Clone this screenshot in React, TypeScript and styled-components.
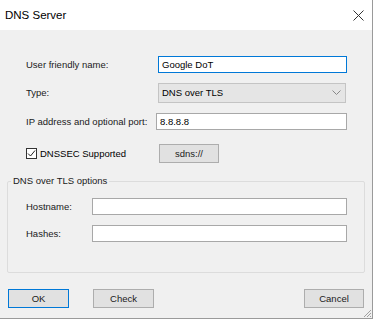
import styled, { createGlobalStyle } from 'styled-components';

const Global = createGlobalStyle`
  html, body {
    margin: 0;
    padding: 0;
    background: #ffffff;
  }
  body {
    font-family: "Liberation Sans", Arial, sans-serif;
    font-size: 9.5px;
    line-height: 12px;
    color: #000;
  }
`;

const Window = styled.div`
  width: 373px;
  height: 319px;
  box-sizing: border-box;
  border-right: 1px solid #9a9a9a;
  border-bottom: 1px solid #9a9a9a;
  display: flex;
  flex-direction: column;
  background: #f0f0f0;
`;

const TitleBar = styled.div`
  height: 30px;
  flex: none;
  background: #ffffff;
  display: flex;
  align-items: center;
  justify-content: space-between;
  padding: 0 8px 0 5px;
`;

const Title = styled.span`
  font-family: "Liberation Sans", Arial, sans-serif;
  font-size: 11.5px;
  color: #000;
`;

const Client = styled.div`
  flex: 1;
  display: flex;
  flex-direction: column;
  padding: 26px 8px 0 7px;
  position: relative;
`;

const Row = styled.div<{ $mb?: number }>`
  display: flex;
  align-items: center;
  padding-left: 19px;
  margin-bottom: ${(p) => p.$mb ?? 10}px;
`;

const Label = styled.label<{ $w: number }>`
  width: ${(p) => p.$w}px;
  flex: none;
  white-space: nowrap;
  color: #1a1a1a;
`;

const TextInput = styled.div<{ $w: number; $focused?: boolean }>`
  width: ${(p) => p.$w}px;
  height: 17px;
  box-sizing: border-box;
  background: #fff;
  border: 1px solid ${(p) => (p.$focused ? '#0078d7' : '#a8a8a8')};
  display: flex;
  align-items: center;
  padding-left: 3px;
  color: #000;
`;

const Combo = styled.div`
  width: 188px;
  height: 20px;
  box-sizing: border-box;
  background: #e5e5e5;
  border: 1px solid #c4c4c4;
  display: flex;
  align-items: center;
  justify-content: space-between;
  padding: 0 4px 0 3px;
`;

const CheckWrap = styled.div`
  width: 133px;
  flex: none;
  display: flex;
  align-items: center;
  gap: 3px;
`;

const CheckBox = styled.span`
  width: 11px;
  height: 11px;
  box-sizing: border-box;
  border: 1px solid #333;
  background: #fff;
  display: flex;
  align-items: center;
  justify-content: center;
`;

const Button = styled.div<{ $w: number; $default?: boolean }>`
  width: ${(p) => p.$w}px;
  height: 19px;
  box-sizing: border-box;
  background: #e1e1e1;
  border: 1px solid ${(p) => (p.$default ? '#0078d7' : '#adadad')};
  display: flex;
  align-items: center;
  justify-content: center;
  color: #1a1a1a;
`;

const Group = styled.fieldset`
  margin: 12px 0 0 0;
  padding: 11px 0 0 0;
  height: 98px;
  box-sizing: border-box;
  border: 1px solid #dcdcdc;
  border-radius: 2px;
  width: 358px;
`;

const Legend = styled.legend`
  padding: 0 2px;
  margin-left: 3px;
  color: #1a1a1a;
`;

const GroupRow = styled.div`
  display: flex;
  align-items: center;
  padding-left: 18px;
  margin-bottom: 10px;
`;

const Footer = styled.div`
  display: flex;
  align-items: center;
  margin-top: 16px;
  padding-left: 1px;
  gap: 24px;
`;

const Spacer = styled.div`
  flex: 1;
`;

const Grip = styled.svg`
  position: absolute;
  right: 0;
  bottom: 0;
`;

export default function App() {
  return (
    <>
      <Global />
      <Window>
        <TitleBar>
          <Title>DNS Server</Title>
          <svg width="11" height="11" viewBox="0 0 11 11">
            <path d="M0.5 0.5 L10.5 10.5 M10.5 0.5 L0.5 10.5" stroke="#333" strokeWidth="1" />
          </svg>
        </TitleBar>
        <Client>
          <Row $mb={10}>
            <Label $w={132}>User friendly name:</Label>
            <TextInput $w={189} $focused>Google DoT</TextInput>
          </Row>
          <Row $mb={10}>
            <Label $w={132}>Type:</Label>
            <Combo>
              <span>DNS over TLS</span>
              <svg width="9" height="6" viewBox="0 0 9 6">
                <path d="M0.5 0.5 L4.5 4.5 L8.5 0.5" stroke="#888" fill="none" />
              </svg>
            </Combo>
          </Row>
          <Row $mb={14}>
            <Label $w={130}>IP address and optional port:</Label>
            <TextInput $w={191}>8.8.8.8</TextInput>
          </Row>
          <Row $mb={0}>
            <CheckWrap>
              <CheckBox>
                <svg width="9" height="9" viewBox="0 0 9 9">
                  <path d="M1 4.5 L3.5 7 L8 1.5" stroke="#222" fill="none" strokeWidth="1" />
                </svg>
              </CheckBox>
              <span>DNSSEC Supported</span>
            </CheckWrap>
            <Button $w={60}>sdns://</Button>
          </Row>
          <Group>
            <Legend>DNS over TLS options</Legend>
            <GroupRow>
              <Label $w={66}>Hostname:</Label>
              <TextInput $w={255} />
            </GroupRow>
            <GroupRow>
              <Label $w={66}>Hashes:</Label>
              <TextInput $w={255} />
            </GroupRow>
          </Group>
          <Footer>
            <Button $w={61} $default>OK</Button>
            <Button $w={61}>Check</Button>
            <Spacer />
            <Button $w={60}>Cancel</Button>
          </Footer>
          <Grip width="11" height="11" viewBox="0 0 11 11">
            <path d="M10 3 L3 10 M10 6 L6 10 M10 9 L9 10" stroke="#a0a0a0" strokeWidth="1" />
          </Grip>
        </Client>
      </Window>
    </>
  );
}
